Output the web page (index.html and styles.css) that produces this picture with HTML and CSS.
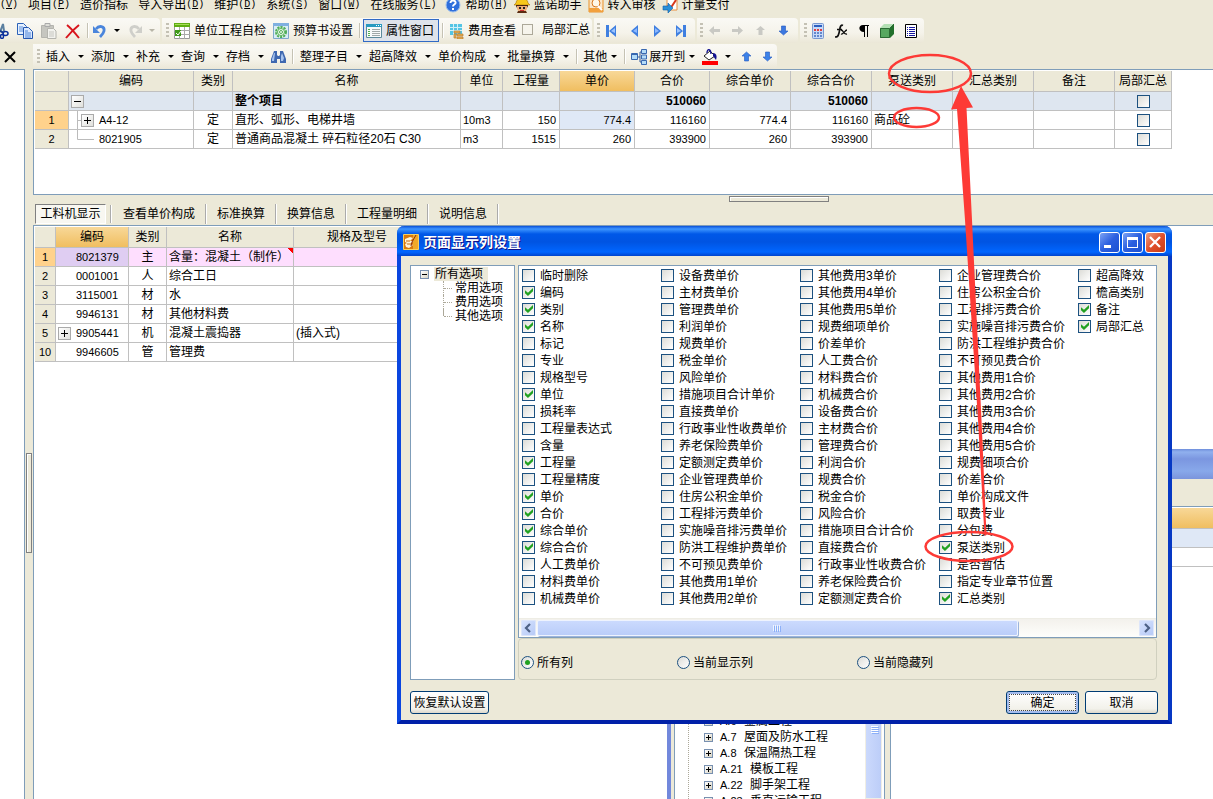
FILE: index.html
```html
<!DOCTYPE html>
<html lang="zh-CN">
<head>
<meta charset="utf-8">
<title>页面显示列设置</title>
<link rel="stylesheet" href="styles.css">
</head>
<body>
<nav class="menubar">
  <a href="#"><span class="key">(<u>V</u>)</span></a>
  <a href="#">项目<span class="key">(<u>P</u>)</span></a>
  <a href="#">造价指标</a>
  <a href="#">导入导出<span class="key">(<u>D</u>)</span></a>
  <a href="#">维护<span class="key">(<u>D</u>)</span></a>
  <a href="#">系统<span class="key">(<u>S</u>)</span></a>
  <a href="#">窗口<span class="key">(<u>W</u>)</span></a>
  <a href="#">在线服务<span class="key">(<u>L</u>)</span></a>
  <a href="#" class="with-icon"><svg width="16" height="16" viewBox="0 0 16 16"><circle cx="8" cy="8" r="7" fill="#2f6fdc" stroke="#9cc0ee"/><path d="M5.500 6c0-3.500 5.500-3.200 5 0-.3 1.600-2.500 1.500-2.500 3.500M8 11v2" fill="none" stroke="#fff" stroke-width="2"/></svg>帮助<span class="key">(<u>H</u>)</span></a>
  <a href="#" class="with-icon"><svg width="16" height="16" viewBox="0 0 16 16"><path d="M3 7h10v5l-2 3H5l-2-3z" fill="#f0b07a"/><path d="M2 6C2 0 14 0 14 6l2 2H0z" fill="#f7c81c" stroke="#a87408" stroke-width=".6"/><path d="M2 8h12v1l-1 2V9H3v2L2 9z" fill="#4a2410"/><path d="M5 10h2v2H5zM9 10h2v2H9z" fill="#222"/><path d="M4 14h8l1 2H3z" fill="#5a2c12"/><path d="M6 13h4v1H6z" fill="#c33"/></svg>蓝诺助手</a>
  <a href="#" class="with-icon"><svg width="16" height="16" viewBox="0 0 16 16"><path d="M1 1h14v14H1z" fill="#fbe6c8" stroke="#e8922c"/><path d="M1 11h14v4H1z" fill="#f2a03c"/><circle cx="8" cy="6" r="4" fill="#fff8e8" stroke="#d87820"/><path d="M10 9l4 4" stroke="#fff" stroke-width="2"/></svg>转入审核</a>
  <a href="#" class="with-icon"><svg width="16" height="16" viewBox="0 0 16 16"><path d="M5 1h10v12H5z" fill="#fff" stroke="#e89040"/><path d="M14 3l-6 9-3-3" fill="none" stroke="#d8381c" stroke-width="2"/><path d="M1 9h5V6l5 5-5 5v-3H1z" fill="#2a8fd8" stroke="#0d5fa8" stroke-width=".6"/></svg>计量支付</a>
</nav>

<div class="toolrow">
  <div class="strip first">
    <button class="tool cut" aria-label="剪切"><svg width="9" height="16" viewBox="0 0 9 16"><path d="M0 9L3 1l1 7" fill="none" stroke="#5b80a0" stroke-width="2"/><path d="M0 8l4 2" stroke="#133a8c" stroke-width="2"/><ellipse cx="5.500" cy="10.500" rx="2.500" ry="2" fill="none" stroke="#0a2f9c" stroke-width="1.500"/><ellipse cx="2" cy="13.500" rx="1.500" ry="2" fill="none" stroke="#0a2f9c" stroke-width="1.500"/></svg></button>
    <button class="tool" aria-label="复制"><svg width="16" height="16" viewBox="0 0 16 16"><path d="M.5.5h6l3 3v8h-9z" fill="#e5f0ff" stroke="#2c62b8"/><path d="M2 4h4M2 6h4M2 8h4" stroke="#5b8fdc"/><path d="M6.500 4.500h5l4 4v7h-9z" fill="#dbe9ff" stroke="#2457b0"/><path d="M8 8h3M8 10h6M8 12h6M8 14h6" stroke="#4c84d8"/></svg></button>
    <button class="tool" aria-label="粘贴"><svg width="16" height="16" viewBox="0 0 16 16"><path d="M.5 2.500h12v12H.5z" fill="#c6c6c0" stroke="#b4b4ae"/><path d="M4 .5h5v3H4z" fill="#deded8" stroke="#aaa"/><path d="M6.500 5.500h6l2.500 2.500v7.500H6.500z" fill="#f2f2ee" stroke="#b4b4ae"/><path d="M8 9h5M8 11h5M8 13h5" stroke="#c6c6c0"/></svg></button>
    <button class="tool" aria-label="删除"><svg width="16" height="16" viewBox="0 0 16 16"><path d="M2 2c4 3 8 8 12 13M14 2C9 6 5 10 1 15" fill="none" stroke="#d8141c" stroke-width="2"/></svg></button>
    <i class="sep"></i>
    <button class="tool split" aria-label="撤销"><svg width="14" height="14" viewBox="0 0 14 14"><path d="M3 5c3-4 9-3 8 2-.4 2-2 4-4 6" fill="none" stroke="#4a85dc" stroke-width="2.800"/><path d="M0 2v7h7z" fill="#4a85dc"/></svg></button><button class="caret" aria-label="撤销列表"></button>
    <button class="tool split" aria-label="恢复"><svg width="14" height="14" viewBox="0 0 14 14"><path d="M11 5C8 1 2 2 3 7c.4 2 2 4 4 6" fill="none" stroke="#cfcfca" stroke-width="2.800"/><path d="M14 2v7H7z" fill="#cfcfca"/></svg></button><button class="caret dim" aria-label="恢复列表"></button>
  </div>
  <div class="strip">
    <i class="grip"></i>
    <button class="tool text"><svg width="16" height="16" viewBox="0 0 16 16"><path d="M.5.5h15v15H.5z" fill="#fff" stroke="#999"/><path d="M0 0h16v4H0z" fill="#5fae12"/><path d="M1 1h14v1H1z" fill="#a8dc58"/><path d="M5.500 4v12M10.500 4v12M0 7.500h16M0 11.500h16" stroke="#aaa"/><path d="M1 7h6v6H1z" fill="#3f9a18"/><path d="M2 10l2 2 3-4" stroke="#fff" fill="none"/></svg>单位工程自检</button>
    <button class="tool text"><svg width="16" height="16" viewBox="0 0 16 16"><path d="M.5.5h15v15H.5z" fill="#d9ecf6" stroke="#7fa8cc"/><path d="M0 0h16v3H0z" fill="#7fb0e0"/><circle cx="8" cy="9" r="5" fill="#eef8e8" stroke="#4fae58" stroke-width="2" stroke-dasharray="2.200 1"/><circle cx="8" cy="9" r="3.500" fill="#f4fbf0" stroke="#4fae58"/><circle cx="8" cy="9" r="1.500" fill="none" stroke="#4fae58"/></svg>预算书设置</button>
    <i class="sep"></i>
    <button class="tool text pressed"><svg width="16" height="14" viewBox="0 0 16 14"><path d="M.5.5h15v13H.5z" fill="#f8fafa" stroke="#5c8a9c"/><path d="M0 0h16v3H0z" fill="#2a9ac0"/><path d="M10 1h1v1h-1zM12 1h1v1h-1zM14 1h1v1h-1z" fill="#fff"/><path d="M2 5.500h2M2 7.500h2M2 9.500h2M2 11.500h2" stroke="#50b050"/><path d="M6 5.500h8M6 7.500h8M6 9.500h8M6 11.500h8" stroke="#a0a8a8"/></svg>属性窗口</button>
    <i class="sep"></i>
    <button class="tool text"><svg width="15" height="16" viewBox="0 0 15 16"><path d="M1 1h12v11H1z" fill="#54c4e4"/><path d="M1 4.500h12M1 7.500h12M4.500 1v11M8.500 1v11" stroke="#d0f0f8"/><path d="M5 8h6v2H5zM8 11h6v2H8zM8 14h6v2H8zM5 11h2v4H5z" fill="#e8b050" stroke="#b87c30" stroke-width=".7"/></svg>费用查看</button>
    <label class="partial"><input type="checkbox" class="flat">局部汇总</label>
  </div>
  <div class="strip nav">
    <i class="grip"></i>
    <button class="tool" aria-label="首条"><svg width="11" height="14" viewBox="0 0 11 14"><path d="M0 1h3v12H0zM10 1v12L3 7z" fill="#3f7fe0"/><path d="M9 4v5L5 7z" fill="#9cc4ff"/></svg></button>
    <button class="tool" aria-label="上一条"><svg width="11" height="14" viewBox="0 0 11 14"><path d="M9 1v12L2 7z" fill="#3f7fe0"/><path d="M8 4v5L4 7z" fill="#8cb8ff"/></svg></button>
    <button class="tool" aria-label="下一条"><svg width="11" height="14" viewBox="0 0 11 14"><path d="M2 1v12l7-6z" fill="#3f7fe0"/><path d="M3 4v5l4-2z" fill="#8cb8ff"/></svg></button>
    <button class="tool" aria-label="末条"><svg width="11" height="14" viewBox="0 0 11 14"><path d="M8 1h3v12H8zM1 1v12l7-6z" fill="#3f7fe0"/><path d="M2 4v5l4-2z" fill="#9cc4ff"/></svg></button>
  </div>
  <div class="strip nav">
    <i class="grip"></i>
    <button class="tool" aria-label="左移"><svg width="11" height="11" viewBox="0 0 11 11"><path d="M0 5.500L5 1v3h6v3H5v3z" fill="#c9c9c4"/></svg></button>
    <button class="tool" aria-label="右移"><svg width="11" height="11" viewBox="0 0 11 11"><path d="M11 5.500L6 1v3H0v3h6v3z" fill="#c9c9c4"/></svg></button>
    <button class="tool" aria-label="上移"><svg width="11" height="11" viewBox="0 0 11 11"><path d="M5.500 1L10 5H7.500v5h-4V5H1z" fill="#c9c9c4"/></svg></button>
    <button class="tool" aria-label="下移"><svg width="11" height="11" viewBox="0 0 11 11"><path d="M5.500 10L10 6H7.500V1h-4v5H1z" fill="#3c78e0" stroke="#2458c0" stroke-width=".6"/></svg></button>
  </div>
  <div class="strip extras">
    <i class="grip"></i>
    <button class="tool" aria-label="计算器"><svg width="12" height="16" viewBox="0 0 12 16"><rect x=".5" y=".5" width="11" height="15" rx="1" fill="#c8daf8" stroke="#7898d0"/><path d="M2 2h8v2H2z" fill="#2c60c0"/><path d="M2 6h2v2H2zM5 6h2v2H5zM8 6h2v2H8z" fill="#e04040"/><path d="M2 9h2v2H2zM5 9h2v2H5zM8 9h2v2H8zM2 12h2v2H2zM5 12h2v2H5zM8 12h2v2H8z" fill="#6488cc"/></svg></button>
    <button class="tool" aria-label="函数"><svg width="13" height="14" viewBox="0 0 13 14"><path d="M8 1.500C5 0 5 5 4 9s-2 4-4 4M2 5.500h5" fill="none" stroke="#111" stroke-width="1.700"/><path d="M6 6c3 0 2 5 6 4M12 6c-2 0-4 5-6 4" fill="none" stroke="#111" stroke-width="1.300"/></svg></button>
    <button class="tool" aria-label="段落标记"><svg width="10" height="12" viewBox="0 0 10 12"><path d="M4 0h6v1H9v11H8V1H6v11H5V7C-1 7-1 0 4 0z" fill="#000"/></svg></button>
    <button class="tool" aria-label="三维"><svg width="14" height="14" viewBox="0 0 14 14"><path d="M0 4l4-4h10l-3 4z" fill="#b4e0b4"/><path d="M0 4h10v10H0z" fill="#58a860"/><path d="M10 4l4-4v10l-4 4z" fill="#22702c"/><path d="M.5 4.500h9v9h-9zM10 4l4-4" fill="none" stroke="#2c6a34"/></svg></button>
    <button class="tool" aria-label="列表"><svg width="12" height="14" viewBox="0 0 12 14"><path d="M.5.5h11v13H.5z" fill="#fff" stroke="#000"/><path d="M2 3.500h1M4 3.500h6M2 5.500h1M4 5.500h6M2 7.500h1M4 7.500h6M2 9.500h1M4 9.500h6M2 11.500h1M4 11.500h6" stroke="#1818a0"/></svg></button>
  </div>
</div>

<div class="toolrow second">
  <button class="tool shut" aria-label="关闭"><svg width="12" height="12" viewBox="0 0 12 12"><path d="M1 1l10 10M11 1L1 11" stroke="#000" stroke-width="2"/></svg></button>
  <div class="strip">
    <i class="grip"></i>
    <button class="drop">插入</button>
    <button class="drop">添加</button>
    <button class="drop">补充</button>
    <button class="drop">查询</button>
    <button class="drop">存档</button>
    <button class="tool" aria-label="查找"><svg width="15" height="14" viewBox="0 0 15 14"><path d="M3 1h3v4l1 1h1l1-1V1h3l3 8v4H9V9H6v4H0V9z" fill="#3f68b0"/><path d="M3 3L1 9v2h2l1-8zM11 3l-1 3v5h2l1-3z" fill="#a8c4ee"/></svg></button>
    <i class="sep"></i>
    <button class="drop">整理子目</button>
    <button class="drop">超高降效</button>
    <button class="drop">单价构成</button>
    <button class="drop">批量换算</button>
    <i class="sep bare"></i>
    <button class="drop tight">其他</button>
    <i class="sep bare"></i>
    <button class="drop tight expand"><svg width="16" height="16" viewBox="0 0 16 16"><path d="M6 8h3M9 3v10M9 3h2M9 13h2" stroke="#345c98" fill="none"/><path d="M.5 4.500h6v6h-6zM10.500.5h5v4h-5zM10.500 6h5v4h-5zM10.500 11.500h5v4h-5z" fill="#b4dcf8" stroke="#3868b0"/><path d="M1 5h5v1H1z" fill="#3868b0"/></svg>展开到</button>
    <button class="tool" aria-label="填充颜色"><svg width="16" height="16" viewBox="0 0 16 16"><path d="M2 7l6-5 5 5-6 4z" fill="#fff" stroke="#222"/><path d="M5 4c0-5 4-4 4 1" fill="none" stroke="#101090" stroke-width="1.300"/><path d="M11 4c4 0 4 4 3 7l-3-4z" fill="#101090"/><path d="M0 12h16v4H0z" fill="#f00"/></svg></button><button class="caret" aria-label="颜色列表"></button>
    <button class="tool move" aria-label="上移"><svg width="11" height="11" viewBox="0 0 11 11"><path d="M5.500 1L10 5H7.500v5h-4V5H1z" fill="#3c82e8" stroke="#2458c0" stroke-width=".6"/></svg></button>
    <button class="tool move" aria-label="下移"><svg width="11" height="11" viewBox="0 0 11 11"><path d="M5.500 10L10 6H7.500V1h-4v5H1z" fill="#3c82e8" stroke="#2458c0" stroke-width=".6"/></svg></button>
  </div>
</div>

<main class="work">
  <aside class="side"></aside>
  <div class="vsplit"><i></i></div>
  <div class="content">
    <section class="upper">
      <table class="grid">
        <colgroup><col class="w34"><col class="w125"><col class="w39"><col class="w228"><col class="w42"><col class="w57"><col class="w75"><col class="w75"><col class="w81"><col class="w81"><col class="w81"><col class="w81"><col class="w81"><col class="w57"></colgroup>
        <thead><tr><th></th><th>编码</th><th>类别</th><th>名称</th><th>单位</th><th>工程量</th><th class="hot">单价</th><th>合价</th><th>综合单价</th><th>综合合价</th><th>泵送类别</th><th>汇总类别</th><th>备注</th><th>局部汇总</th></tr></thead>
        <tbody>
          <tr class="total"><th></th><td class="node root"><button class="exp" aria-label="折叠"><svg width="13" height="13" viewBox="0 0 13 13"><path d="M3 6.500h7" stroke="#000"/></svg></button></td><td></td><td>整个项目</td><td></td><td></td><td></td><td class="num">510060</td><td></td><td class="num">510060</td><td></td><td></td><td></td><td class="mid"><input type="checkbox" aria-label="整个项目局部汇总"></td></tr>
          <tr><th class="cur">1</th><td class="node branch"><div><svg class="line" width="4" height="18" viewBox="0 0 4 18"><path d="M.5 0v18M0 9.500h4" stroke="#bbb" fill="none"/></svg><button class="exp" aria-label="展开"><svg width="13" height="13" viewBox="0 0 13 13"><path d="M3 6.500h7M6.500 3v7" stroke="#000"/></svg></button><span class="small">A4-12</span></div></td><td class="mid">定</td><td>直形、弧形、电梯井墙</td><td class="small">10m3</td><td class="num">150</td><td class="num sel">774.4</td><td class="num">116160</td><td class="num">774.4</td><td class="num">116160</td><td>商品砼</td><td></td><td></td><td class="mid"><input type="checkbox" aria-label="第1行局部汇总"></td></tr>
          <tr><th>2</th><td class="node branch"><div><svg class="line" width="17" height="18" viewBox="0 0 17 18"><path d="M.5 0v9.500H17" stroke="#bbb" fill="none"/></svg><span class="small">8021905</span></div></td><td class="mid">定</td><td>普通商品混凝土 碎石粒径20石 C30</td><td class="small">m3</td><td class="num">1515</td><td class="num">260</td><td class="num">393900</td><td class="num">260</td><td class="num">393900</td><td></td><td></td><td></td><td class="mid"><input type="checkbox" aria-label="第2行局部汇总"></td></tr>
        </tbody>
      </table>
    </section>
    <div class="hsplit"><i></i></div>
    <div class="tabs">
      <button class="on">工料机显示</button><button>查看单价构成</button><button>标准换算</button><button>换算信息</button><button>工程量明细</button><button>说明信息</button>
    </div>
    <section class="lower">
      <table class="grid">
        <colgroup><col class="w21"><col class="w73"><col class="w38"><col class="w127"><col class="w127"></colgroup>
        <thead><tr><th></th><th class="hot">编码</th><th>类别</th><th>名称</th><th>规格及型号</th></tr></thead>
        <tbody>
          <tr class="pink"><th class="cur">1</th><td class="code-cell">8021379</td><td class="mid">主</td><td class="flag">含量：混凝土（制作）</td><td></td></tr>
          <tr><th>2</th><td class="code-cell">0001001</td><td class="mid">人</td><td>综合工日</td><td></td></tr>
          <tr><th>3</th><td class="code-cell">3115001</td><td class="mid">材</td><td>水</td><td></td></tr>
          <tr><th>4</th><td class="code-cell">9946131</td><td class="mid">材</td><td>其他材料费</td><td></td></tr>
          <tr><th>5</th><td class="code-cell open"><div><button class="exp" aria-label="展开"><svg width="13" height="13" viewBox="0 0 13 13"><path d="M3 6.500h7M6.500 3v7" stroke="#000"/></svg></button>9905441</div></td><td class="mid">机</td><td>混凝土震捣器</td><td>(插入式)</td></tr>
          <tr><th>10</th><td class="code-cell">9946605</td><td class="mid">管</td><td>管理费</td><td></td></tr>
        </tbody>
      </table>
    </section>
  </div>
</main>

<section class="library">
  <div class="lib-title"></div>
  <div class="lib-tools"></div>
  <div class="lib-body">
    <div class="lib-tree">
      <ul>
        <li><b></b><span class="code">A.6</span>金属工程</li>
        <li><b></b><span class="code">A.7</span>屋面及防水工程</li>
        <li><b></b><span class="code">A.8</span>保温隔热工程</li>
        <li><b></b><span class="code wide">A.21</span>模板工程</li>
        <li><b></b><span class="code wide">A.22</span>脚手架工程</li>
        <li><b></b><span class="code wide">A.23</span>垂直运输工程</li>
      </ul>
      <div class="vbar"><svg width="8" height="8" viewBox="0 0 8 8"><path d="M0 .5h7M0 2.500h7M0 4.500h7M0 6.500h7" stroke="#fff"/><path d="M1 1.500h7M1 3.500h7M1 5.500h7M1 7.500h7" stroke="#8cb0f8"/></svg></div>
    </div>
    <div class="lib-list"><div class="lib-head"></div><div class="lib-row tint"></div><div class="lib-row"></div></div>
  </div>
</section>

<section class="dialog" role="dialog" aria-labelledby="dlg-title">
  <header>
    <svg width="16" height="16" viewBox="0 0 16 16"><path d="M.5.5h15v15H.5z" fill="#d8780c" stroke="#f8d060"/><path d="M10 1h5v14h-5z" fill="#f0a828"/><path d="M2 5l5-2 3 1-3 3h3l-2 3 2 1-4 3-3-1-1-3 2-1-2-1z" fill="#fff4d8"/><path d="M13 1L9 8l-1 4" stroke="#8a2c08" fill="none"/><path d="M3 7h4M4 10h4" stroke="#c86808"/></svg>
    <h1 id="dlg-title">页面显示列设置</h1>
    <button class="win" aria-label="最小化"><svg width="21" height="21" viewBox="0 0 21 21"><path d="M5 13h7v3H5z" fill="#fff"/></svg></button>
    <button class="win" aria-label="最大化"><svg width="21" height="21" viewBox="0 0 21 21"><path d="M5 5h11v11H5zM6 8v7h9V8z" fill="#fff" fill-rule="evenodd"/></svg></button>
    <button class="win close" aria-label="关闭"><svg width="21" height="21" viewBox="0 0 21 21"><path d="M5 5l10 10M15 5L5 15" stroke="#fff" stroke-width="2.300"/></svg></button>
  </header>
  <div class="dlg-body">
    <div class="panes">
      <div class="opts">
        <div class="opt-root"><button class="box" aria-label="折叠"></button><span>所有选项</span></div>
        <ul><li>常用选项</li><li>费用选项</li><li>其他选项</li></ul>
      </div>
      <div class="right">
        <div class="list">
          <div class="checks">
            <label><input type="checkbox">临时删除</label>
            <label><input type="checkbox" checked>编码</label>
            <label><input type="checkbox" checked>类别</label>
            <label><input type="checkbox" checked>名称</label>
            <label><input type="checkbox">标记</label>
            <label><input type="checkbox">专业</label>
            <label><input type="checkbox">规格型号</label>
            <label><input type="checkbox" checked>单位</label>
            <label><input type="checkbox">损耗率</label>
            <label><input type="checkbox">工程量表达式</label>
            <label><input type="checkbox">含量</label>
            <label><input type="checkbox" checked>工程量</label>
            <label><input type="checkbox">工程量精度</label>
            <label><input type="checkbox" checked>单价</label>
            <label><input type="checkbox" checked>合价</label>
            <label><input type="checkbox" checked>综合单价</label>
            <label><input type="checkbox" checked>综合合价</label>
            <label><input type="checkbox">人工费单价</label>
            <label><input type="checkbox">材料费单价</label>
            <label><input type="checkbox">机械费单价</label>
            <label><input type="checkbox">设备费单价</label>
            <label><input type="checkbox">主材费单价</label>
            <label><input type="checkbox">管理费单价</label>
            <label><input type="checkbox">利润单价</label>
            <label><input type="checkbox">规费单价</label>
            <label><input type="checkbox">税金单价</label>
            <label><input type="checkbox">风险单价</label>
            <label><input type="checkbox">措施项目合计单价</label>
            <label><input type="checkbox">直接费单价</label>
            <label><input type="checkbox">行政事业性收费单价</label>
            <label><input type="checkbox">养老保险费单价</label>
            <label><input type="checkbox">定额测定费单价</label>
            <label><input type="checkbox">企业管理费单价</label>
            <label><input type="checkbox">住房公积金单价</label>
            <label><input type="checkbox">工程排污费单价</label>
            <label><input type="checkbox">实施噪音排污费单价</label>
            <label><input type="checkbox">防洪工程维护费单价</label>
            <label><input type="checkbox">不可预见费单价</label>
            <label><input type="checkbox">其他费用1单价</label>
            <label><input type="checkbox">其他费用2单价</label>
            <label><input type="checkbox">其他费用3单价</label>
            <label><input type="checkbox">其他费用4单价</label>
            <label><input type="checkbox">其他费用5单价</label>
            <label><input type="checkbox">规费细项单价</label>
            <label><input type="checkbox">价差单价</label>
            <label><input type="checkbox">人工费合价</label>
            <label><input type="checkbox">材料费合价</label>
            <label><input type="checkbox">机械费合价</label>
            <label><input type="checkbox">设备费合价</label>
            <label><input type="checkbox">主材费合价</label>
            <label><input type="checkbox">管理费合价</label>
            <label><input type="checkbox">利润合价</label>
            <label><input type="checkbox">规费合价</label>
            <label><input type="checkbox">税金合价</label>
            <label><input type="checkbox">风险合价</label>
            <label><input type="checkbox">措施项目合计合价</label>
            <label><input type="checkbox">直接费合价</label>
            <label><input type="checkbox">行政事业性收费合价</label>
            <label><input type="checkbox">养老保险费合价</label>
            <label><input type="checkbox">定额测定费合价</label>
            <label><input type="checkbox">企业管理费合价</label>
            <label><input type="checkbox">住房公积金合价</label>
            <label><input type="checkbox">工程排污费合价</label>
            <label><input type="checkbox">实施噪音排污费合价</label>
            <label><input type="checkbox">防洪工程维护费合价</label>
            <label><input type="checkbox">不可预见费合价</label>
            <label><input type="checkbox">其他费用1合价</label>
            <label><input type="checkbox">其他费用2合价</label>
            <label><input type="checkbox">其他费用3合价</label>
            <label><input type="checkbox">其他费用4合价</label>
            <label><input type="checkbox">其他费用5合价</label>
            <label><input type="checkbox">规费细项合价</label>
            <label><input type="checkbox">价差合价</label>
            <label><input type="checkbox">单价构成文件</label>
            <label><input type="checkbox">取费专业</label>
            <label><input type="checkbox">分包费</label>
            <label><input type="checkbox" checked>泵送类别</label>
            <label><input type="checkbox">是否暂估</label>
            <label><input type="checkbox">指定专业章节位置</label>
            <label><input type="checkbox" checked>汇总类别</label>
            <label><input type="checkbox">超高降效</label>
            <label><input type="checkbox">檐高类别</label>
            <label><input type="checkbox" checked>备注</label>
            <label><input type="checkbox" checked>局部汇总</label>
          </div>
          <div class="hbar">
            <button aria-label="向左滚动"><svg width="15" height="15" viewBox="0 0 15 15"><path d="M9 3L5 7l4 4" fill="none" stroke="#4d6185" stroke-width="2.200"/></svg></button>
            <div class="thumb"><svg width="9" height="7" viewBox="0 0 9 7"><path d="M.5 0v6M2.500 0v6M4.500 0v6M6.500 0v6" stroke="#eef4fe"/><path d="M1.500 1v6M3.500 1v6M5.500 1v6M7.500 1v6" stroke="#8cb0f8"/></svg></div>
            <button aria-label="向右滚动"><svg width="15" height="15" viewBox="0 0 15 15"><path d="M6 3l4 4-4 4" fill="none" stroke="#4d6185" stroke-width="2.200"/></svg></button>
          </div>
        </div>
        <div class="radios">
          <label><input type="radio" name="scope" checked>所有列</label>
          <label><input type="radio" name="scope">当前显示列</label>
          <label><input type="radio" name="scope">当前隐藏列</label>
        </div>
      </div>
    </div>
    <footer>
      <button class="push reset">恢复默认设置</button>
      <button class="push default">确定</button>
      <button class="push">取消</button>
    </footer>
  </div>
</section>

<svg class="marks" width="1213" height="799" viewBox="0 0 1213 799">
  <g fill="none" stroke="#fd3a36" stroke-width="2.500">
    <ellipse cx="930" cy="73.500" rx="41" ry="18.500"/>
    <ellipse cx="916.500" cy="117.500" rx="22.500" ry="9.500"/>
    <ellipse cx="969" cy="546.500" rx="43.500" ry="14.500"/>
  </g>
  <path d="M961 86l12 21.500-6.500.5L972 220l9.500 200 5 115-2 1L978 420 965 220l-8-111-6 .5z" fill="#fd3a36"/>
</svg>
</body>
</html>
```
FILE: styles.css
```css
* { box-sizing: border-box; }
html { height: 100%; }
body {
  margin: 0;
  height: 100%;
  position: relative;
  display: flex;
  flex-direction: column;
  overflow: hidden;
  background: #ece9d8;
  color: #000;
  font: 12px/16px "Liberation Sans", "Noto Sans CJK SC", sans-serif;
}
button {
  font: inherit;
  color: inherit;
  padding: 0;
  border: 0;
  background: none;
}
svg { display: block; flex: none; }
ul { list-style: none; margin: 0; padding: 0; }

/* menu */
.menubar {
  display: flex;
  flex: none;
  align-items: flex-end;
  gap: 10px;
  height: 18px;
  padding: 0 0 1px;
  overflow: hidden;
  white-space: nowrap;
}
.menubar a {
  display: flex;
  align-items: center;
  height: 24px;
  color: #000;
  text-decoration: none;
}
.menubar .with-icon { gap: 4px; margin: 0 -3px 0 -1px; }
.key { font: 10px/16px "Liberation Mono", monospace; }
.with-icon .key { margin-left: -4px; }

/* toolbars */
.toolrow { display: flex; flex: none; height: 25px; gap: 2px; white-space: nowrap; }
.second { height: 26px; padding-top: 1px; gap: 17px; }
.strip {
  display: flex;
  align-items: center;
  height: 25px;
  padding: 0 4px;
  border-radius: 0 4px 4px 0;
  background: linear-gradient(#faf9f5, #f5f3ea 60%, #ebe7d7);
}
.tool { display: flex; align-items: center; gap: 4px; }
.sep {
  width: 2px;
  height: 15px;
  margin: 0 6px;
  border-left: 1px solid #c5c2b4;
  border-right: 1px solid #fff;
}
.sep.bare { margin: 0 5px 0 0; }
.grip {
  width: 3px;
  height: 15px;
  margin-right: 5px;
  background: repeating-linear-gradient(#c4c1b4 0 2px, transparent 2px 4px);
}
.caret, .drop::after {
  width: 0;
  height: 0;
  border: 3px solid transparent;
  border-top-color: #000;
  border-bottom-width: 0;
}
.caret { padding: 0; }
.caret.dim { border-top-color: #b8b5a8; }
.tool + .caret { margin-left: 7px; }
.first { padding: 0 5px 0 0; }
.first .tool { margin-right: 8px; }
.first .sep { margin: 0 4px 0 -2px; }
.first .split { margin-right: 0; }
.first .caret { margin-right: 8px; }
.first .dim { margin-right: 0; }
.text + .text { margin-left: 7px; }
.pressed {
  height: 23px;
  padding: 0 4px 0 2px;
  margin: 0 -4px;
  border: 1px solid #316ac5;
  background: #dfe3ea;
}
.pressed + .sep { margin: 0 5px 0 7px; }
.partial { display: flex; align-items: center; gap: 9px; margin: 0 -2px 2px 6px; }
.nav .tool { margin: 0 6px; width: 11px; justify-content: center; }
.nav { padding: 0 3px; }
.nav .grip { margin-right: 0; }
.extras { gap: 11px; padding-right: 7px; }
.extras .grip { margin-right: -6px; }
.shut { margin-left: 4px; }
.second .strip > .grip { margin-right: 6px; }
.drop { display: flex; align-items: center; padding-right: 7px; }
.drop::after { content: ""; margin-left: 8px; }
.drop.tight::after { margin-left: 4px; }
.expand svg { margin-right: 2px; }
.move { margin-left: 10px; }

/* working area */
.work { display: flex; flex: 1; min-height: 0; }
.side { width: 25px; flex: none; background: #fff; border: 1px solid #7f9db9; border-width: 1px 1px 0 0; }
.vsplit { width: 8px; flex: none; padding: 384px 0 0 1px; }
.vsplit i, .hsplit i { display: block; background: #ece9d8; border: 1px solid #808080; box-shadow: inset 1px 1px #fff; }
.vsplit i { width: 6px; height: 100px; }
.content { flex: 1; min-width: 0; display: flex; flex-direction: column; }
.upper { flex: none; height: 126px; padding: 1px 0 0 1px; background: #fff; border: 1px solid #7f9db9; border-right: 0; overflow: hidden; }
.hsplit { flex: none; height: 8px; padding: 1px 0 0 312px; }
.hsplit i { width: 100px; height: 6px; margin: 0 auto; }
.tabs { flex: none; display: flex; align-items: center; height: 22px; padding-left: 2px; }
.tabs button { height: 20px; padding: 0 10px; border-right: 2px groove #fff; }
.tabs .on {
  position: relative;
  width: 71px;
  padding: 0;
  margin-right: 7px;
  border: 1px solid #fff;
  border-top-color: #808080;
  border-left-color: #808080;
  background: #f8f7f1;
}
.tabs .on::after { content: ""; position: absolute; left: 74px; top: 0; height: 18px; border-left: 2px groove #fff; }
.lower { flex: 1; min-height: 0; padding: 1px 0 0 1px; background: #fff; border: 1px solid #7f9db9; border-width: 1px 0 0 1px; overflow: hidden; }

.grid { width: min-content; table-layout: fixed; border-collapse: separate; border-spacing: 0; }
.grid th, .grid td {
  height: 19px;
  padding: 0 2px;
  border: 1px solid #c0c0c0;
  border-width: 0 1px 1px 0;
  overflow: hidden;
  white-space: nowrap;
  line-height: 16px;
}
.grid th { font-weight: normal; background: #ece9d8; padding: 0; text-align: center; }
.grid thead th { height: 21px; }
.grid tbody th { font-size: 11px; }
.grid .hot { background: linear-gradient(#f8d898, #f0be60); }
.grid .cur { background: #ffd28c; }
.grid .num { text-align: right; font-size: 11px; padding-right: 3px; }
.grid .small, .grid .code-cell { font-size: 11px; }
.grid .mid { text-align: center; padding: 0; }
.grid .mid input { display: block; margin: 0 auto; }
.total td { background: #dee6f0; font-weight: bold; }
.grid .total .num { font-size: 12px; }
.grid .sel { background: #dfe8f6; }
.grid .root { padding-left: 2px; }
.grid .branch { padding-left: 8px; }
.branch div, .open div { display: flex; align-items: center; height: 18px; }
.branch .small { margin-left: 5px; }
.grid .code-cell { padding-left: 20px; }
.grid .open { padding-left: 2px; }
.open .exp { margin-right: 5px; }
.grid .pink td { background: #fedefe; }
.grid .pink .code-cell { background: #dfcdf2; }
.grid .pink .flag { background: linear-gradient(45deg, transparent 50%, #f00 50%) top right / 6px 6px no-repeat, #fedefe; }
.exp { display: block; width: 13px; height: 13px; border: 1px solid #aaa; background: linear-gradient(135deg, #fff, #e0e0dc); }
.exp svg { margin: -1px; }
.w21 { width: 21px; } .w34 { width: 34px; } .w38 { width: 38px; } .w39 { width: 39px; }
.w42 { width: 42px; } .w57 { width: 57px; } .w73 { width: 73px; } .w75 { width: 75px; }
.w81 { width: 81px; } .w125 { width: 125px; } .w127 { width: 127px; } .w228 { width: 228px; }

/* form controls */
input { appearance: none; margin: 0; flex: none; }
input[type="checkbox"] {
  width: 13px;
  height: 13px;
  border: 1px solid #1c5180;
  background: linear-gradient(135deg, #dcdcd7, #fff);
}
input[type="checkbox"]:checked::after {
  content: "";
  display: block;
  width: 8px;
  height: 8px;
  margin: 1px 2px;
  background: #21a121;
  clip-path: polygon(0 28%, 0 66%, 37% 100%, 100% 42%, 100% 0, 37% 58%);
}
input.flat { width: 11px; height: 11px; border-color: #aca899; background: #f6f4ec; }
input[type="radio"] {
  width: 13px;
  height: 13px;
  border: 1px solid #1c5180;
  border-radius: 50%;
  background: linear-gradient(135deg, #dcdcd7, #fff);
}
input[type="radio"]:checked::after {
  content: "";
  display: block;
  width: 5px;
  height: 5px;
  margin: 3px;
  border-radius: 50%;
  background: #21a121;
}

/* library window behind the dialog */
.library {
  position: absolute;
  left: 667px;
  right: 0;
  top: 449px;
  bottom: 0;
  display: flex;
  flex-direction: column;
  border-left: 4px solid #7288dc;
  background: #ece9d8;
}
.lib-title { flex: none; height: 30px; background: linear-gradient(#6f8fdc, #90b0ee 3px, #7b96e0 10px, #88a8ea 22px, #7b94dc); }
.lib-tools { flex: none; height: 27px; }
.lib-body { flex: 1; min-height: 0; display: flex; gap: 5px; padding-left: 3px; }
.lib-tree, .lib-list { background: #fff; border: 1px solid #7f9db9; border-bottom: 0; overflow: hidden; }
.lib-tree { width: 211px; flex: none; display: flex; padding-right: 2px; }
.lib-tree ul { flex: 1; margin-left: 13px; padding: 206px 0 0 15px; border-left: 1px dotted #aca899; }
.lib-tree li { display: flex; align-items: center; height: 16px; white-space: nowrap; }
.lib-tree b, .box {
  width: 9px;
  height: 9px;
  border: 1px solid #7890b0;
  background: linear-gradient(#000, #000) center / 5px 1px no-repeat, linear-gradient(#000, #000) center / 1px 5px no-repeat, linear-gradient(135deg, #fff, #d8d4c4);
}
.lib-tree b { margin-right: 7px; }
.code { width: 24px; font-size: 11px; }
.code.wide { width: 30px; }
.vbar { width: 17px; padding: 218px 0 0 5px; border: 1px solid #f0eee4; background: linear-gradient(90deg, #cbd9fc, #bccdf8); }
.lib-list { flex: 1; border-right: 0; padding-top: 1px; }
.lib-head { height: 21px; background: linear-gradient(#f8d898, #f0be60); border-bottom: 1px solid #c0c0c0; }
.lib-row { height: 19px; border-bottom: 1px solid #c0c0c0; }
.lib-row.tint { background: #dfe8f6; }

/* dialog */
.dialog {
  position: absolute;
  left: 397px;
  top: 226px;
  width: 775px;
  border: 4px solid #0838cc;
  border-color: #0a3ad4 #0638c4 #0020a8 #0a46e0;
  border-top: 0;
  border-radius: 7px 7px 0 0;
  background: #ece9d8;
}
.dialog header {
  display: flex;
  align-items: center;
  gap: 2px;
  height: 30px;
  margin: 0 -4px;
  padding: 2px 6px 0;
  border-radius: 7px 7px 0 0;
  background: linear-gradient(#0a50d8, #3d95ff 3px, #0058e8 8px, #0054e2 16px, #0066ff 26px, #0044cc);
}
.dialog h1 { flex: 1; margin: 0 0 0 2px; font-size: 14px; line-height: 20px; color: #fff; text-shadow: 1px 1px #0f1089; }
.win { width: 21px; height: 21px; border: 1px solid #fff; border-radius: 3px; background: linear-gradient(135deg, #7ba2f4, #2b5fe0 50%, #1c50d0); }
.win svg { margin: -1px; }
.close { background: linear-gradient(135deg, #f0a080, #e0502c 50%, #c83c14); }
.dlg-body { padding: 9px 10px 6px 9px; }
.panes { display: flex; gap: 3px; height: 415px; padding-right: 1px; }
.opts { width: 105px; flex: none; padding: 1px 0 0 9px; background: #fff; border: 1px solid #7f9db9; }
.opt-root { display: flex; align-items: center; gap: 5px; height: 14px; }
.opt-root span { padding: 0 5px 0 1px; background: #ece9d8; line-height: 14px; }
.box { background: linear-gradient(#000, #000) center / 5px 1px no-repeat, linear-gradient(135deg, #fff, #d8d4c4); }
.opts ul { margin-left: 23px; }
.opts li { display: flex; align-items: center; height: 14px; gap: 3px; border-left: 1px dotted #aca899; }
.opts li::before { content: ""; width: 8px; border-top: 1px dotted #aca899; }
.opts li:last-child { border-image: linear-gradient(#aca899 50%, transparent 50%) 1; }
.right { flex: 1; min-width: 0; display: flex; flex-direction: column; }
.list { height: 373px; display: flex; flex-direction: column; background: #fff; border: 1px solid #7f9db9; }
.checks { flex: 1; display: grid; grid-auto-flow: column; grid-template-rows: repeat(20, 17px); grid-auto-columns: 139px; padding: 1px 0 0 3px; overflow: hidden; }
.checks label, .radios label { display: flex; align-items: center; gap: 5px; white-space: nowrap; }
.hbar { flex: none; display: flex; height: 19px; padding: 1px 2px; gap: 1px; border-top: 1px solid #eeede5; background: linear-gradient(#f3f1ec, #fefefb); }
.hbar button { width: 15px; height: 16px; border-radius: 2px; background: linear-gradient(135deg, #d8e4fe, #b4c8f6); box-shadow: 0 0 0 1px #dde6fa inset; }
.hbar button:last-child { margin-left: auto; }
.thumb { width: 481px; height: 16px; display: flex; align-items: center; justify-content: center; border: 1px solid #eef3fe; border-radius: 2px; background: linear-gradient(#cbdafe, #bacdf9); box-shadow: 1px 1px #9cb4dc; }
.radios { flex: 1; display: flex; align-items: center; gap: 104px; padding: 7px 0 0 2px; border: 1px solid #d0d0bf; border-radius: 4px; }
.radios label { gap: 3px; }
.dialog footer { display: flex; gap: 6px; margin-top: 11px; }
.push { width: 73px; height: 23px; border: 1px solid #003c74; border-radius: 3px; background: linear-gradient(#fff, #f2f1ea 80%, #dcd8cc); }
.reset { width: 79px; margin-right: auto; }
.default { box-shadow: inset 0 0 0 2px #a4bcee; outline: 1px dotted #444; outline-offset: -4px; }

.marks { position: absolute; left: 0; top: 0; pointer-events: none; }
```
